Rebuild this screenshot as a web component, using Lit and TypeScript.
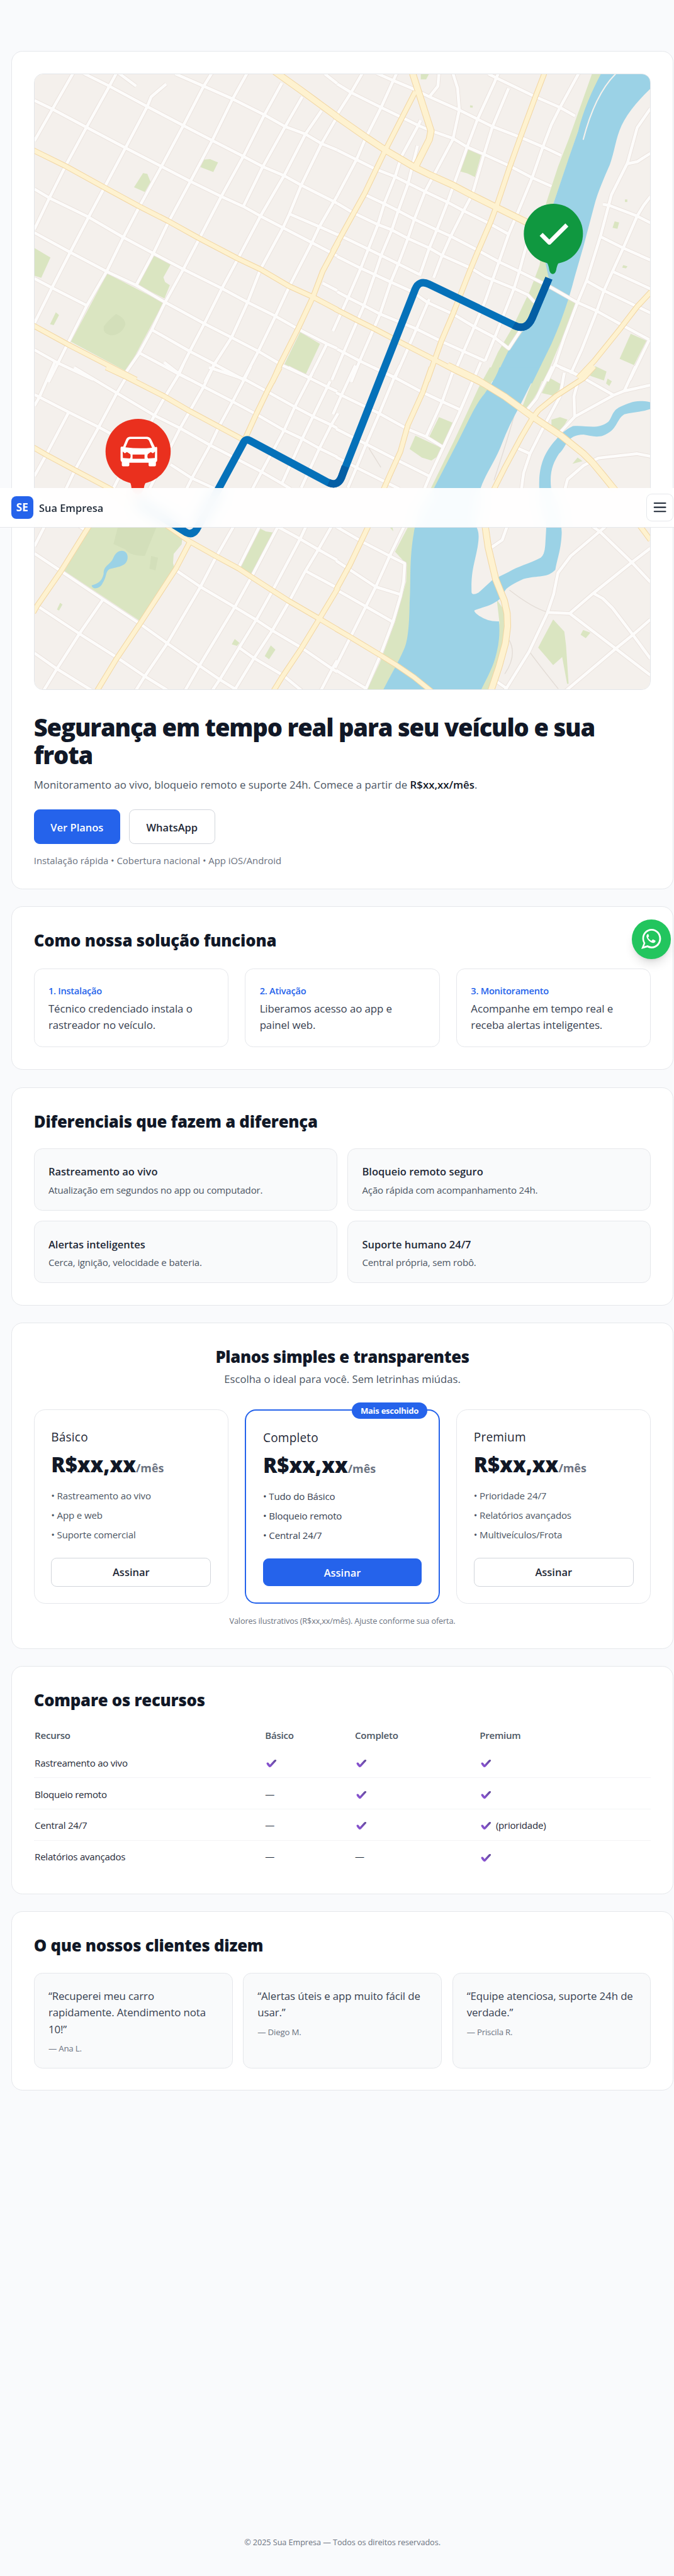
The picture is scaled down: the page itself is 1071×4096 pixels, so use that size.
import { LitElement, html, svg, css } from "lit";
import { customElement } from "lit/decorators.js";

interface Tile {
  x: number;
  y: number;
  minor: string[];
  main: string[];
  wide?: string[];
}

/* The map is drawn from four half-scale tiles that share one canvas. */
const tiles: Tile[] = [
  {
    x: 0,
    y: 0,
    minor: [
      "335,130 240,297 155,447",
      "537,130 505,190 398,383 300,565 225,715 155,862",
      "770,180 700,240 682,285 580,480 482,665 408,805 322,970 237,1137 155,1303",
      "982,130 945,190 850,375 748,567 645,755 570,900 492,1060 400,1220 310,1400 265,1490 220,1580",
      "1147,130 1080,250 985,445 883,637 782,825 710,975 630,1125",
      "1310,175 1228,325 1130,520 1027,708 925,905 850,1050 765,1205 705,1330 640,1450 585,1530",
      "1405,240 1325,380 1220,570 1130,755",
      "1495,305 1420,415 1320,610 1210,800 1105,1000 1030,1140 948,1305 880,1435 825,1545",
      "1570,330 1495,460 1400,655 1345,790 1315,855 1210,1050 1150,1205 1075,1370 995,1495 950,1580",
      "1568,705 1485,850 1450,925 1345,1130 1280,1270 1200,1435 1130,1568",
      "1520,1400 1440,1560",
      "550,130 630,190",
      "385,130 505,190 680,285 850,375 985,445 1130,520 1225,570 1320,610 1400,655 1568,740",
      "155,257 237,297 398,383 580,480 748,567 883,637 1027,708 1130,755 1210,800 1315,855 1450,925 1568,987",
      "812,132 945,190 1080,250 1228,325 1325,380 1420,415 1495,460 1568,490",
      "1510,132 1568,178",
      "1345,790 1485,850 1568,887",
      "155,673 225,715 408,805 570,900 710,975 850,1050 1030,1140 1150,1205 1280,1270 1385,1330 1520,1400 1568,1422",
      "155,878 322,970 492,1060 630,1125 765,1205 948,1305 1075,1370 1200,1435 1310,1500 1440,1560",
      "155,1093 237,1137 400,1220",
      "705,1335 880,1435 995,1495 1130,1568",
      "640,1440 825,1540 880,1568",
      "155,1428 265,1490 430,1568",
      "1500,1115 1568,1150",
    ],
    main: [
      "150,491 300,565 480,665 645,755 782,825 925,905 1105,1000 1210,1050 1345,1130 1455,1180 1568,1240",
      "150,1314 310,1402 585,1545 630,1568",
      "1572,925 1500,1060 1455,1180 1385,1330 1300,1500 1265,1580",
    ],
    wide: ["1275,120 1330,160 1400,210 1572,337"],
  },
  {
    x: 784,
    y: 0,
    minor: [
      "117,130 65,220 0,322",
      "277,130 205,290 130,440 90,535 0,705",
      "475,130 470,190 430,240",
      "390,350 375,380 300,520 270,615 220,740 190,840 145,955 110,1045 50,1185 -20,1340",
      "540,130 562,200 570,300 540,440 455,600 410,685 360,815 330,905 285,1025 250,1110 200,1260 105,1480 65,1580",
      "375,470 330,650 285,775 255,865 205,985 175,1075 125,1220 30,1440 -25,1570",
      "752,130 735,170 655,345 605,480 545,650 515,735 465,865 430,950 385,1080",
      "800,200 725,380 685,510 630,700 590,775 530,895 490,985 450,1090",
      "430,1190 370,1330 270,1560",
      "1127,130 1040,290 1000,370 960,475 910,620 840,790 800,885 755,1015 690,1200 640,1320 590,1435 545,1540",
      "885,930 850,1060 825,1140 735,1370 690,1480",
      "0,180 65,220 205,290 380,375 440,400 540,435 605,475 685,510 805,565 910,620 1000,660",
      "185,130 265,165 360,205 430,240 565,300 655,345 725,380 855,430 960,475 1045,515",
      "705,132 750,155 925,240 1040,290 1110,330",
      "0,490 90,535 180,580 270,615 330,645 410,685 515,735 590,775 710,835 800,885",
      "130,700 225,745 285,775 360,815 465,865 530,895 655,960 755,1015 850,1060 980,1125 1120,1205 1210,1245 1335,1315 1455,1380",
      "0,740 75,785 190,840 255,865 330,905 430,950 490,985 625,1045 690,1085 825,1140 890,1170 922,1205",
      "0,885 145,955 205,985 285,1025 385,1075",
      "0,990 110,1045 175,1075 250,1110 350,1155 420,1205 540,1260 640,1320 735,1370 800,1422 860,1330",
      "0,1155 55,1185 125,1220 200,1260 370,1330 490,1390 590,1435 690,1480",
      "0,1425 30,1440 105,1480 270,1560",
      "1462,295 1400,385 1355,550 1280,700 1230,890 1165,1100 1120,1210 1060,1370 1020,1490 980,1575",
      "1462,505 1400,545 1350,555",
      "1240,745 1270,750 1400,800 1462,832",
      "1462,708 1430,750 1400,800 1335,950 1285,1060 1245,1150 1210,1250 1140,1430 1090,1540",
      "1225,895 1335,950 1462,1007",
      "1165,1105 1245,1150 1462,1255",
      "1285,1060 1462,1142",
      "1457,1380 1365,1570",
      "1010,1495 1100,1535 1160,1565",
    ],
    main: [
      "967,130 925,240 855,430 805,570 745,750 715,830 655,970 620,1055 540,1260 485,1390 455,1475 420,1575",
      "365,215 225,490 130,690 75,790 20,890 -20,965",
      "-10,1236 85,1285 175,1330 270,1380 455,1475 550,1525 690,1593",
      "1465,1155 1400,1225 1320,1330 1200,1480 1125,1560",
    ],
    wide: [
      "-10,328 135,430 225,490 360,570 430,605 540,655 625,700 745,760 890,832",
      "352,130 438,400 430,440 365,570",
    ],
  },
  {
    x: 0,
    y: 758,
    minor: [
      "250,-30 180,130 155,175",
      "155,122 180,135 315,205 455,275 510,305",
      "340,-5 540,115 715,220 835,280 975,360 1110,430 1215,485 1310,540 1350,565",
      "760,-30 830,25 945,85 1080,155 1200,220 1320,290 1405,330 1485,375 1568,415",
      "970,-5 1135,50 1245,110 1370,180 1455,225 1540,265 1568,280",
      "1340,-5 1440,45 1520,85 1568,108",
      "790,450 890,515 1000,565",
      "590,30 540,115 455,275 345,475 300,570",
      "315,205 210,405 155,505",
      "850,-20 830,25 760,140 715,220 700,250",
      "550,510 520,570",
      "1000,-30 945,85 880,200 835,280 790,370",
      "1165,-10 1135,50 1080,155 1015,275 975,360 890,515 865,565",
      "1450,25 1370,180 1320,290 1215,485 1170,570",
      "1535,60 1455,225 1405,330 1310,540",
      "1572,210 1540,265 1485,375 1400,560",
      "690,570 740,470",
      "205,735 155,835",
      "155,868 270,945 470,1080 650,1200 775,1290 925,1395 1020,1460 1100,1510",
      "365,740 398,762",
      "170,1115 365,1245 545,1360 670,1445 775,1510",
      "155,1336 260,1410 420,1510",
      "475,1085 365,1245 260,1410 198,1512",
      "1085,740 1000,890 930,1025 775,1290 670,1445 628,1512",
      "1208,735 1110,930",
      "1295,735 1170,975 1090,1120 925,1395 858,1512",
      "1295,745 1395,800 1480,850 1568,900",
      "1425,735 1395,800 1265,1045 1190,1180 1020,1460 985,1512",
      "1545,735 1480,850 1420,950 1340,1100 1265,1230 1180,1360 1092,1505",
      "820,950 930,1025 1090,1120 1190,1180 1265,1230 1400,1310 1545,1410 1568,1425",
      "1110,1310 1180,1360 1315,1440 1402,1512",
      "1420,950 1568,1030",
      "1568,1370 1545,1410 1492,1512",
    ],
    main: [
      "1300,-5 1245,100 1190,215 1140,325",
      "490,-5 585,40 760,130 880,200 1010,270 1140,340",
      "150,370 210,405 340,475 500,560 640,645 880,812 1000,880 1110,940 1170,980 1270,1045 1340,1090 1485,1175 1572,1227",
      "410,740 280,950 170,1110 150,1145",
      "880,815 815,940 650,1195 540,1360 448,1512",
      "1572,1030 1485,1175 1400,1315 1310,1450 1272,1512",
    ],
  },
  {
    x: 784,
    y: 758,
    minor: [
      "550,-15 490,155 415,320",
      "670,-30 575,195 495,370 430,510 405,570",
      "295,-15 265,45 195,215 135,355 90,465 50,560",
      "85,-15 20,125 -20,215",
      "170,-5 265,40 395,110 490,155 578,195",
      "-5,113 195,210 330,285 415,320 495,370",
      "-5,283 135,355 280,430 430,505",
      "-5,415 90,465 210,525 290,565",
      "1005,-10 930,140 890,190",
      "1060,20 1040,130 960,280 900,400 870,490 860,565",
      "845,375 900,400",
      "1040,-5 1090,15 1150,45 1290,125",
      "1392,-10 1340,105",
      "1462,78 1340,105 1290,125 1110,225 1040,300",
      "1125,55 1105,130 1108,225",
      "1462,412 1400,400 1220,420 1150,455 1075,520 1063,565",
      "315,735 245,880 180,1025 60,1265 -10,1405",
      "-5,742 120,815 245,880 315,915 310,1000 295,1070 260,1190 200,1350 130,1512",
      "-5,902 180,1025 300,1062",
      "-5,1038 130,1115 260,1190",
      "-5,1417 130,1500",
      "795,735 770,805 720,840",
      "1260,735 1225,765 1090,880 1030,960 1010,1060 980,1150 895,1330 783,1512",
      "1190,740 1225,765 1375,910 1462,1003",
      "1462,843 1375,910 1195,1055 1085,1150",
      "985,1145 1085,1150 1300,1315 1462,1440",
      "1195,1055 1240,1080 1285,1125 1380,1250 1462,1362",
      "1462,1178 1380,1250 1300,1315 1068,1512",
      "745,1470 795,1505",
    ],
    main: [
      "440,-5 400,110 330,265 295,390 250,490 215,570",
      "148,735 60,920 -5,1040",
      "-5,1222 60,1260 200,1345 280,1395 360,1450 440,1515",
      "1410,735 1462,805",
      "1200,-10 1150,45 1020,130 940,195 910,235 860,320 780,470 730,570",
    ],
    wide: [
      "515,-15 650,50 780,130 910,225 1045,315 1150,400 1190,440 1240,500 1300,575",
      "690,735 705,840 740,990 780,1090 793,1150 795,1210 785,1290 755,1400 718,1512",
    ],
  },
];

const greens = [
  { x: 0, y: 0, p: "495,1070 757,1207 585,1530 325,1390" },
  { x: 0, y: 0, p: "712,982 792,1025 757,1088 765,1110 787,1125 762,1187 640,1125" },
  { x: 0, y: 0, p: "155,950 230,995 187,1090 155,1080" },
  { x: 0, y: 0, p: "945,535 975,533 1012,548 990,593 930,570" },
  { x: 0, y: 0, p: "662,598 682,602 697,640 670,687 620,665" },
  { x: 0, y: 0, p: "255,1252 270,1265 245,1312 228,1308" },
  { x: 0, y: 0, p: "1395,1345 1488,1400 1422,1542 1322,1495" },
  { x: 784, y: 0, p: "608,482 672,512 643,617 608,600 573,590" },
  { x: 784, y: 0, p: "1370,1353 1443,1385 1385,1500 1318,1470" },
  { x: 784, y: 0, p: "1205,1505 1257,1530 1245,1572 1180,1550" },
  { x: 784, y: 0, p: "390,130 430,130 415,158 390,158" },
  { x: 784, y: 0, p: "1295,825 1316,830 1308,860 1285,855" },
  { x: 784, y: 0, p: "1335,1030 1355,1036 1348,1046 1330,1042" },
  { x: 784, y: 0, p: "1343,722 1354,722 1354,734 1343,734" },
  { x: 784, y: 0, p: "620,280 633,282 632,291 620,290" },
  { x: 0, y: 758, p: "420,740 765,745 845,800 842,825 805,870 802,915 812,948 645,1183 295,950" },
  { x: 0, y: 758, p: "1210,752 1235,765 1270,770 1170,965 1115,935" },
  { x: 0, y: 758, p: "1258,1300 1280,1320 1250,1365 1230,1350" },
  { x: 0, y: 758, p: "1090,1270 1112,1288 1100,1302 1076,1295" },
  { x: 0, y: 758, p: "275,1100 286,1108 270,1136 260,1132" },
  { x: 784, y: 758, p: "475,228 540,255 495,365 430,320" },
  { x: 784, y: 758, p: "365,315 485,372 465,415 440,432 395,418 338,378" },
  { x: 784, y: 758, p: "990,43 1055,80 1010,128 955,115" },
  { x: 784, y: 758, p: "1000,240 1040,228 1075,240 1040,298 1000,280" },
  { x: 784, y: 758, p: "1262,47 1282,60 1270,82 1255,70" },
  { x: 784, y: 758, p: "1122,418 1145,435 1098,447" },
  { x: 784, y: 758, p: "1008,1178 1060,1235 1068,1300 1080,1480 1073,1480 1050,1355 1008,1392 938,1310" },
  { x: 784, y: 758, p: "1148,1228 1182,1240 1160,1266 1136,1250" },
  { x: 784, y: 758, p: "245,745 258,745 262,765" },
  { x: 784, y: 0, p: "1190,130 1130,300 1080,440 1030,570 975,740 945,1030 900,1150 820,1320 750,1440 690,1575 740,1575 880,1320 990,1090 1010,740 1125,400 1235,130" },
  { x: 784, y: 0, p: "1075,1190 1112,1207 1060,1350 965,1575 905,1575 1000,1380" },
  { x: 784, y: 758, p: "712,-5 760,-5 695,110 560,370 450,565 436,565 545,340 660,90" },
  { x: 784, y: 758, p: "935,-5 982,-5 935,110 890,185 860,190" },
  { x: 784, y: 758, p: "333,740 372,740 345,1180 325,1300 280,1385 215,1512 138,1512 200,1380 270,1190 322,1000 325,920 270,860" },
  { x: 784, y: 758, p: "745,1085 790,1150 800,1250 740,1450 705,1512 665,1512 740,1350 757,1190" },
];

const roads = (kind: "minor" | "main" | "wide", cls: string) =>
  tiles.map(
    (t) => svg`<g transform="translate(${t.x} ${t.y}) scale(.5)" class=${cls}>
      ${(t[kind] ?? []).map((p) => svg`<polyline points=${p}></polyline>`)}
    </g>`,
  );

const route = "M1278,546 L1240,637 Q1226,672 1196,656 L998,560 Q975,549 966,572 L796,1008 Q787,1037 762,1025 L580,927 Q571,922 566,931 L510,1035 L455,1137 Q446,1150 432,1143 L316,1070";

@customElement("route-map")
class RouteMap extends LitElement {
  static styles = css`
    :host { display: block; }
    svg { display: block; width: 100%; height: 100%; }
    polyline, .line { fill: none; stroke-linejoin: round; }
    .minor-edge { stroke: #e9e0db; stroke-width: 19; }
    .minor { stroke: #fdfcfb; stroke-width: 14; }
    .main-edge { stroke: #f2d6a2; stroke-width: 26; }
    .main { stroke: #fef2d0; stroke-width: 20; }
    .wide-edge { stroke: #f2d6a2; stroke-width: 33; }
    .wide { stroke: #fef2d0; stroke-width: 27; }
    .green { fill: #dae5c1; }
    .water { fill: #9bd2e6; }
    .shade { fill: #d3dfba; }
    .faint { fill: none; stroke: #e3dcd6; stroke-width: 2; }
  `;

  render() {
    return html`<svg viewBox="78 67 1437 1445" preserveAspectRatio="none" aria-hidden="true">
      <rect x="78" y="67" width="1437" height="1445" fill="#f4f0ec"></rect>
      ${greens.map((g) => svg`<polygon class="green" points=${g.p} transform="translate(${g.x} ${g.y}) scale(.5)"></polygon>`)}
      <path class="shade" d="M268,630 Q290,640 290,655 Q280,680 255,680 Q235,675 240,658 Q255,640 268,630z M272,1131 L362,1131 L335,1198 Q300,1198 290,1183 L262,1170z M350,1198 L366,1202 L360,1232 L346,1228z"></path>
      <path class="faint" d="M858,945 L886,990 M1207,830 Q1190,900 1150,1020 M1186,1278 Q1240,1320 1275,1330 M1232,1422 Q1260,1460 1300,1510 M1185,1395 Q1205,1430 1175,1475"></path>
      <g class="water">
        <path transform="translate(784 0) scale(.5)" d="M1232,130 C1190,210 1150,300 1125,400 L1080,530 L1008,745 L960,960 L987,1090 C965,1150 900,1290 860,1350 L800,1430 L725,1585 L910,1585 L1000,1400 C1040,1310 1080,1200 1110,1080 L1150,940 L1200,750 C1215,690 1250,610 1272,560 C1300,480 1300,420 1340,350 Q1380,280 1462,202 L1462,130z"></path>
        <path transform="translate(784 758) scale(.5)" d="M757,-5 C740,50 700,100 690,115 C650,160 620,230 570,330 L450,565 C400,650 370,700 358,770 C335,900 345,1000 338,1100 Q336,1260 315,1310 C290,1370 260,1420 213,1512 L670,1512 C700,1450 730,1400 745,1330 Q762,1260 755,1187 Q700,1190 655,1155 Q635,1140 642,1135 C680,1120 720,1115 757,1084 L785,1040 Q800,1020 870,988 C940,970 980,985 1018,945 C1030,880 1045,850 1048,770 C1048,700 1010,630 998,560 C990,480 1010,440 1035,400 C1070,370 1070,310 1150,310 C1180,315 1210,325 1240,315 C1310,290 1300,240 1340,215 C1380,203 1420,205 1462,190 L1462,158 C1390,145 1370,160 1320,180 C1280,200 1285,230 1265,250 C1210,290 1170,265 1100,270 C1060,290 1040,310 1020,335 C960,400 940,470 943,560 C950,640 980,690 975,760 L971,830 Q968,875 950,888 C900,915 840,930 800,955 Q770,970 725,992 L660,1052 Q625,1070 627,1045 C625,950 640,920 655,840 C665,780 660,760 645,735 L670,560 C690,500 740,430 770,350 Q800,270 850,180 L942,-5z"></path>
        <path transform="translate(0 758) scale(.5)" d="M590,885 C590,850 545,842 525,885 C510,925 478,920 478,965 C470,1000 450,1010 422,1018 C425,1040 460,1035 472,1010 C495,975 485,955 505,942 C545,930 590,930 590,885z"></path>
      </g>
      <path class="line" stroke="#f5f1ec" stroke-width="3" d="M1434,66 Q1385,115 1358,221"></path>
      ${roads("minor", "minor-edge")} ${roads("minor", "minor")}
      ${roads("main", "main-edge")} ${roads("wide", "wide-edge")}
      ${roads("main", "main")} ${roads("wide", "wide")}
      <path class="line" d=${route} stroke="#0571b9" stroke-width="17.5"></path>
      <path class="line" d="M1278,546 L1240,637 Q1226,672 1196,656" stroke="#045ea4" stroke-width="17.5"></path>
      <path class="line" d="M803,988 L796,1008 Q787,1037 764,1026" stroke="#045ea4" stroke-width="17.5"></path>
      <g fill="#109840">
        <ellipse cx="1288.5" cy="441.5" rx="69" ry="70.5"></ellipse>
        <path d="M1272,508 Q1277,512 1279,527 Q1281,536 1287,536 Q1293,536 1295,527 Q1297,514 1302,508z"></path>
      </g>
      <path class="line" d="M1260,443 L1279,462 L1320,421" stroke="#fff" stroke-width="10" stroke-linejoin="miter"></path>
      <g fill="#ea301e">
        <ellipse cx="319.5" cy="952.5" rx="76" ry="76.5"></ellipse>
        <path d="M297,1020 Q303,1026 304,1038 Q308,1052 319,1054 Q330,1052 333,1038 Q334,1028 342,1020z"></path>
      </g>
      <g transform="translate(0 758) scale(.5)">
        <path fill="#fff" fill-rule="evenodd" d="M600,320 H682 Q694,321 700,333 L718,370 Q728,364 728,374 V430 Q728,437 722,439 V454 Q722,459 716,459 H693 Q688,459 688,454 V442 H598 V454 Q598,459 592,459 H569 Q563,459 563,454 V439 Q557,437 557,428 V374 Q557,364 569,367 L583,333 Q588,321 600,320z M603,331 H678 Q686,331 690,339 L704,372 Q642,378 580,370 L593,339 Q596,331 603,331z M567,390 L577,398 L587,392 L603,402 Q606,418 600,422 L568,420z M718,390 L708,398 L698,392 L684,402 Q680,418 686,422 L717,420z M613,404 H669 V424 H613z"></path>
      </g>
    </svg>`;
  }
}

const steps = [
  { title: "1. Instalação", text: "Técnico credenciado instala o rastreador no veículo." },
  { title: "2. Ativação", text: "Liberamos acesso ao app e painel web." },
  { title: "3. Monitoramento", text: "Acompanhe em tempo real e receba alertas inteligentes." },
];

const features = [
  { title: "Rastreamento ao vivo", text: "Atualização em segundos no app ou computador." },
  { title: "Bloqueio remoto seguro", text: "Ação rápida com acompanhamento 24h." },
  { title: "Alertas inteligentes", text: "Cerca, ignição, velocidade e bateria." },
  { title: "Suporte humano 24/7", text: "Central própria, sem robô." },
];

const plans = [
  { name: "Básico", items: ["Rastreamento ao vivo", "App e web", "Suporte comercial"], best: false },
  { name: "Completo", items: ["Tudo do Básico", "Bloqueio remoto", "Central 24/7"], best: true },
  { name: "Premium", items: ["Prioridade 24/7", "Relatórios avançados", "Multiveículos/Frota"], best: false },
];

const rows = [
  ["Rastreamento ao vivo", "✓", "✓", "✓"],
  ["Bloqueio remoto", "—", "✓", "✓"],
  ["Central 24/7", "—", "✓", "✓ (prioridade)"],
  ["Relatórios avançados", "—", "—", "✓"],
];

const quotes = [
  { text: "“Recuperei meu carro rapidamente. Atendimento nota 10!”", who: "— Ana L." },
  { text: "“Alertas úteis e app muito fácil de usar.”", who: "— Diego M." },
  { text: "“Equipe atenciosa, suporte 24h de verdade.”", who: "— Priscila R." },
];

const tick = html`<svg class="tick" viewBox="0 0 20 15"><defs><linearGradient id="t" x1="0" y1="1" x2="1" y2="0"><stop offset="0" stop-color="#9254e0"></stop><stop offset="1" stop-color="#5f4a96"></stop></linearGradient></defs><path fill="url(#t)" d="M.5 7.800Q.2 6 2 5.400Q3.800 5 4.800 6.800L7 9.600L14.800 1.200Q16.600-.4 18.600.3Q20 1 18.900 2.800L9.400 13.300Q7.200 15.600 5 13.900Q2 11.500.5 7.800z"></path></svg>`;

const cell = (v: string) => (v.startsWith("✓") ? html`${tick}<span>${v.slice(1).trim()}</span>` : html`<span>${v}</span>`);

@customElement("app-root")
class AppRoot extends LitElement {
  static styles = css`
    :host { display: block; }
    * { box-sizing: border-box; margin: 0; }
    .page {
      position: relative; zoom: 0.8867; width: 1207.8px; height: 4619.300px; overflow: hidden;
      display: flex; flex-direction: column; padding: 91.300px 1px 0 20.300px;
      background: #f9fafc; color: #111827; font-family: "Open Sans", "Noto Sans", sans-serif;
    }
    main { display: flex; flex-direction: column; gap: 30.600px; }
    .card { background: #fff; border: 1px solid #e5e7eb; border-radius: 20px; padding: 42.900px 39.200px 0; }
    .hero { height: 1503.600px; padding-top: 39px; }
    .how { height: 293.400px; }
    .feat { height: 391.400px; }
    .plans-card { height: 585.500px; }
    .table-card { height: 409.400px; }
    .says { height: 321.600px; }
    route-map { height: 1106px; border: 1px solid #e2e5e9; border-radius: 16px; overflow: hidden; }
    h1 { margin-top: 41.500px; font-size: 43px; line-height: 50px; font-weight: 800; letter-spacing: -1.32px; }
    h2 { font-size: 29px; line-height: 36px; font-weight: 800; letter-spacing: -.26px; }
    h3 { font-weight: 600; }
    .how h2 { letter-spacing: -.17px; }
    .plans-card h2 { letter-spacing: -.4px; }
    .lead { margin-top: 14.300px; font-size: 18.950px; line-height: 30px; color: #4b5563; }
    .lead b { color: #111827; font-weight: 600; }
    .actions { display: flex; gap: 15.600px; margin-top: 28.200px; }
    .btn { display: flex; align-items: center; justify-content: center; height: 62px; width: 154.700px; border-radius: 10px; border: 1px solid #d1d5db; background: #fff; font-size: 18.600px; font-weight: 600; color: #1f2937; }
    .actions .btn { padding-top: 3.400px; }
    .primary { background: #2563eb; border-color: #2563eb; color: #fff; }
    .note { margin-top: 16.500px; font-size: 16.750px; line-height: 25px; color: #6b7280; }
    .three { display: grid; grid-template-columns: repeat(3, 1fr); gap: 30px; }
    .steps { margin-top: 30.800px; }
    .step { height: 141.500px; border: 1px solid #e5e7eb; border-radius: 15px; padding: 26px 25px; }
    .step h3 { font-size: 16.500px; line-height: 26px; color: #2563eb; letter-spacing: -.3px; }
    .step p { margin-top: 4.700px; padding-right: 16px; font-size: 19px; line-height: 30px; color: #374151; letter-spacing: -.08px; }
    .features { display: grid; grid-template-columns: 1fr 1fr; gap: 18.700px; margin-top: 29.800px; }
    .feature { height: 111.500px; border: 1px solid #e5e7eb; border-radius: 15px; background: #f9fafb; padding: 26.500px 25px; }
    .feature h3 { font-size: 18.600px; line-height: 30px; color: #1f2937; }
    .feature p { margin-top: 4px; font-size: 17px; line-height: 26px; color: #4b5563; letter-spacing: -.19px; }
    .plans-card { text-align: center; }
    .sub { margin-top: 7px; font-size: 18.800px; line-height: 30px; color: #4b5563; }
    .plans { margin-top: 39.100px; text-align: left; }
    .plan { position: relative; height: 348.700px; border: 1px solid #e5e7eb; border-radius: 20px; padding: 31px 30px; }
    .best { border: 2.300px solid #2563eb; }
    .badge { position: absolute; top: -15px; right: 20px; width: 135px; height: 30px; border-radius: 15px; background: #2563eb; color: #fff; font-size: 14.800px; font-weight: 700; line-height: 30px; text-align: center; letter-spacing: -.33px; }
    .plan h3 { font-size: 21.500px; line-height: 34px; font-weight: 500; color: #1f2937; letter-spacing: .2px; }
    .price { display: flex; align-items: baseline; margin-top: 10.800px; height: 45px; line-height: 45px; }
    .price b { font-size: 37.200px; font-weight: 800; }
    .per { font-size: 20.200px; font-weight: 700; color: #6b7280; }
    .plan ul { list-style: none; padding: 0; margin-top: 20.300px; display: flex; flex-direction: column; gap: 10px; }
    .plan li { font-size: 17px; line-height: 25px; color: #4b5563; letter-spacing: -.18px; }
    .best li { color: #374151; }
    .plan .btn { width: 100%; height: 52px; margin-top: 28.700px; }
    .best .btn { height: 50px; }
    .fine { margin-top: 19.700px; font-size: 14.300px; line-height: 22px; color: #6b7280; letter-spacing: -.14px; }
    .table { margin-top: 21.700px; font-size: 17px; color: #1f2937; letter-spacing: -.27px; }
    .head, .row { display: grid; grid-template-columns: 413px 161px 223.500px 1fr; padding-left: 1.500px; align-items: center; }
    .head { height: 43.500px; font-weight: 600; color: #4b5563; }
    .row { height: 56px; padding-top: 2px; border-bottom: 1px solid #f3f4f6; }
    .row:last-child { border: 0; }
    .row div { display: flex; align-items: center; }
    .tick { width: 19px; height: 14px; margin: 3px 8px 0 2px; }
    .quotes { display: grid; grid-template-columns: repeat(3, 1fr); gap: 18.700px; margin-top: 29.800px; }
    .quote { height: 172px; border: 1px solid #e5e7eb; border-radius: 15px; background: #f9fafb; padding: 26.200px 25px; }
    .quote p { font-size: 19px; line-height: 30px; color: #374151; letter-spacing: -.1px; }
    .quote small { display: block; margin-top: 8.600px; font-size: 15px; line-height: 22px; color: #6b7280; letter-spacing: -.25px; }
    footer { margin-top: auto; padding-bottom: 48.300px; text-align: center; font-size: 14.300px; line-height: 25px; color: #6b7280; letter-spacing: -.07px; }
    .bar { position: absolute; left: 0; right: 0; top: 875px; height: 71px; display: flex; align-items: center; padding: 0 1px 0 20px; border-bottom: 1px solid #e5e7eb; background: rgba(255, 255, 255, 0.93); backdrop-filter: blur(12px); }
    .logo { width: 40px; height: 40px; border-radius: 9px; background: #2563eb; color: #fff; font-size: 19.500px; font-weight: 700; line-height: 41.500px; text-align: center; }
    .brand { flex: 1; margin-left: 10px; padding-top: 1.500px; font-size: 18.500px; font-weight: 600; color: #1f2937; }
    .menu { width: 49px; height: 50px; border: 1px solid #e5e7eb; border-radius: 10px; background: #fff; display: grid; place-items: center; }
    .menu svg { width: 24px; height: 24px; }
    .fab { position: absolute; left: 1131.800px; top: 1649px; width: 70.500px; height: 70.500px; border-radius: 50%; background: #22c55e; display: grid; place-items: center; box-shadow: 0 12px 18px -4px rgba(0, 0, 0, 0.13), 0 5px 7px -4px rgba(0, 0, 0, 0.1); }
    .fab svg { width: 36px; height: 36px; }
  `;

  render() {
    return html`<div class="page">
      <main>
        <section class="card hero">
          <route-map></route-map>
          <h1>Segurança em tempo real para seu veículo e sua frota</h1>
          <p class="lead">Monitoramento ao vivo, bloqueio remoto e suporte 24h. Comece a partir de <b>R$xx,xx/mês</b>.</p>
          <div class="actions">
            <a class="btn primary"><span>Ver Planos</span></a>
            <a class="btn"><span>WhatsApp</span></a>
          </div>
          <p class="note">Instalação rápida • Cobertura nacional • App iOS/Android</p>
        </section>
        <section class="card how">
          <h2>Como nossa solução funciona</h2>
          <div class="three steps">
            ${steps.map((s) => html`<div class="step"><h3>${s.title}</h3><p>${s.text}</p></div>`)}
          </div>
        </section>
        <section class="card feat">
          <h2>Diferenciais que fazem a diferença</h2>
          <div class="features">
            ${features.map((f) => html`<div class="feature"><h3>${f.title}</h3><p>${f.text}</p></div>`)}
          </div>
        </section>
        <section class="card plans-card">
          <h2>Planos simples e transparentes</h2>
          <p class="sub">Escolha o ideal para você. Sem letrinhas miúdas.</p>
          <div class="three plans">
            ${plans.map(
              (p) => html`<div class="plan ${p.best ? "best" : ""}">
                ${p.best ? html`<div class="badge"><span>Mais escolhido</span></div>` : ""}
                <h3>${p.name}</h3>
                <div class="price"><b>R$xx,xx</b><span class="per">/mês</span></div>
                <ul>${p.items.map((i) => html`<li>• ${i}</li>`)}</ul>
                <a class="btn ${p.best ? "primary" : ""}"><span>Assinar</span></a>
              </div>`,
            )}
          </div>
          <p class="fine">Valores ilustrativos (R$xx,xx/mês). Ajuste conforme sua oferta.</p>
        </section>
        <section class="card table-card">
          <h2>Compare os recursos</h2>
          <div class="table">
            <div class="head"><span>Recurso</span><span>Básico</span><span>Completo</span><span>Premium</span></div>
            ${rows.map((r) => html`<div class="row">${r.map((v) => html`<div>${cell(v)}</div>`)}</div>`)}
          </div>
        </section>
        <section class="card says">
          <h2>O que nossos clientes dizem</h2>
          <div class="quotes">
            ${quotes.map((q) => html`<div class="quote"><p>${q.text}</p><small>${q.who}</small></div>`)}
          </div>
        </section>
      </main>
      <footer>© 2025 Sua Empresa — Todos os direitos reservados.</footer>
      <header class="bar">
        <div class="logo"><span>SE</span></div>
        <div class="brand">Sua Empresa</div>
        <div class="menu"><svg viewBox="0 0 24 24" stroke="#1f2937" stroke-width="2.400" stroke-linecap="round"><path d="M2 4.500h20M2 12h20M2 19.500h20"></path></svg></div>
      </header>
      <a class="fab" aria-label="WhatsApp">
        <svg viewBox="0 0 32 32" fill="#fff"><path fill-rule="evenodd" d="M16.500 0C8 0 1.700 6.800 1.700 15.200c0 2.800.8 5.300 2 7.500L0 32l9.800-2.600c2 1 4.300 1.600 6.700 1.600C25 31 31.500 24 31.500 15.500S25 0 16.500 0zm0 2.700c6.800 0 12.100 5.600 12.100 12.600S23.300 28 16.500 28c-2.300 0-4.500-.7-6.300-1.800l-5.800 1.600 2.100-5.300c-1.400-2.100-2.200-4.600-2.200-7.300C4.300 8.300 9.700 2.700 16.500 2.700z"></path><path d="M11.500 8.200c-.7-.2-1.500 0-2 .6-1 1.100-1.500 2.500-1 4.300 1 4 5.500 8.500 9.700 9.200 2 .3 3.600-.6 4.300-2 .4-.9.300-1.400-.3-1.700l-3-1.600c-.5-.3-1-.2-1.400.3l-1 1.200c-.3.400-.7.400-1.200.2-2-1-3.600-2.600-4.500-4.300-.2-.4-.2-.7.100-1.100l.9-1.200c.3-.4.3-.8.100-1.300l-1.100-2.300z"></path></svg>
      </a>
    </div>`;
  }
}
